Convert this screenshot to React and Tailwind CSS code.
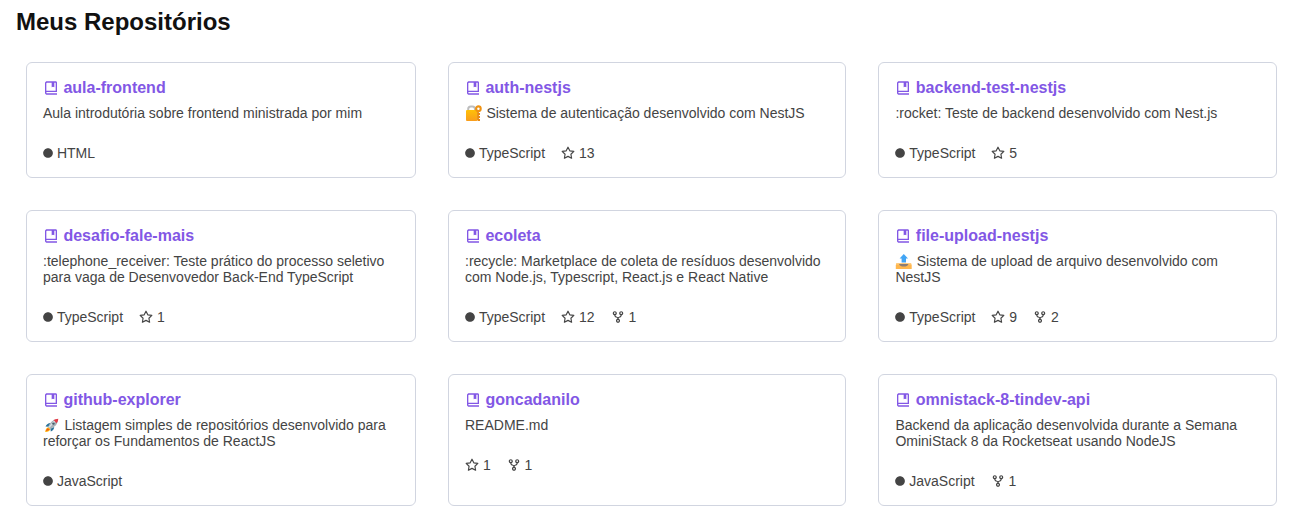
import { BiBookBookmark, BiGitRepoForked } from "react-icons/bi";
import { FiStar } from "react-icons/fi";
import { FaCircle } from "react-icons/fa";

function LockIcon() {
  return (
    <svg className="-my-1 mr-[3.9px] inline-block h-[17px] w-[17.5px] align-[0px]" viewBox="0 0 17.5 17" role="img" aria-label="🔐">
      <defs>
        <linearGradient id="lock-body" x1="0" y1="0" x2="0" y2="1">
          <stop offset="0" stopColor="#ffc107" />
          <stop offset="1" stopColor="#f99d1c" />
        </linearGradient>
      </defs>
      <path d="M3.2 6V4Q3.2 1.4 5.8 1.4H7.4Q10 1.4 10 4V6" fill="none" stroke="#bdbdbd" strokeWidth="2" />
      <rect x="1" y="5" width="11.4" height="11" rx="1" fill="url(#lock-body)" />
      <path d="M13 5V15.5M13 9H15M13 12H15M13 15H15" fill="none" stroke="#e88a12" strokeWidth="1.8" />
      <circle cx="13.4" cy="3.7" r="2.3" fill="none" stroke="#ef9212" strokeWidth="2.1" />
    </svg>
  );
}

function UploadIcon() {
  return (
    <svg className="-my-1 mr-[3.9px] inline-block h-[17px] w-[17.5px] align-[0px]" viewBox="0 0 17.5 17" role="img" aria-label="📤">
      <path d="M1.8 10H15.7L16.7 12V16H.8V12Z" fill="#ffb74d" />
      <path d="M1.3 10H16.2V11.5H1.3Z" fill="#ffcc80" />
      <path d="M4 11H13.5Q12.5 13.6 8.8 13.6T4 11Z" fill="#8d7d73" />
      <path d="M8.8 1L13 5.5H11V9.5H6.6V5.5H4.6Z" fill="#42a5f5" />
    </svg>
  );
}

function RocketIcon() {
  return (
    <svg className="-my-1 mr-[3.9px] inline-block h-[17px] w-[17.5px] align-[0px]" viewBox="0 0 17.5 17" role="img" aria-label="🚀">
      <path d="M5.7 10.2Q2.5 10.8 2.2 15Q6.5 14.8 7.4 12Z" fill="#ffb300" />
      <path d="M4.5 11.2L2.8 14.2L6.5 12.8Z" fill="#f4511e" />
      <path d="M7.5 6Q4.2 6.2 2.5 9.6L6 9.7ZM11.2 10Q11 13 7.8 14.5L7.4 11.5Z" fill="#29739b" />
      <path d="M15 2Q9.8 2.3 6.9 6.5L4.9 10L7.2 12.3L10.8 10Q15 7 15 2Z" fill="#a5b1b8" />
      <path d="M12.2 3.5L6 10.4" stroke="#d9e0e4" strokeWidth="1.4" />
      <path d="M15.3 1.7Q12.4 1.8 10.5 3.1L13.7 6.3Q15.2 4.4 15.3 1.7Z" fill="#e53945" />
      <circle cx="10.4" cy="6.6" r="1.2" fill="#47606d" />
    </svg>
  );
}

const repos = [
  { name: "aula-frontend", text: "Aula introdutória sobre frontend ministrada por mim", lang: "HTML" },
  { name: "auth-nestjs", icon: LockIcon, text: "Sistema de autenticação desenvolvido com NestJS", lang: "TypeScript", stars: 13 },
  { name: "backend-test-nestjs", text: ":rocket: Teste de backend desenvolvido com Nest.js", lang: "TypeScript", stars: 5 },
  { name: "desafio-fale-mais", text: ":telephone_receiver: Teste prático do processo seletivo para vaga de Desenvovedor Back-End TypeScript", lang: "TypeScript", stars: 1 },
  { name: "ecoleta", text: ":recycle: Marketplace de coleta de resíduos desenvolvido com Node.js, Typescript, React.js e React Native", lang: "TypeScript", stars: 12, forks: 1 },
  { name: "file-upload-nestjs", icon: UploadIcon, text: "Sistema de upload de arquivo desenvolvido com NestJS", lang: "TypeScript", stars: 9, forks: 2 },
  { name: "github-explorer", icon: RocketIcon, text: "Listagem simples de repositórios desenvolvido para reforçar os Fundamentos de ReactJS", lang: "JavaScript" },
  { name: "goncadanilo", text: "README.md", stars: 1, forks: 1 },
  { name: "omnistack-8-tindev-api", text: "Backend da aplicação desenvolvida durante a Semana OminiStack 8 da Rocketseat usando NodeJS", lang: "JavaScript", forks: 1 },
];

function RepoCard({ repo }) {
  const Emoji = repo.icon;
  return (
    <article className="rounded-md border border-[#d1d5e0] p-4">
      <h2 className="flex h-[18px] items-center gap-[4.45px] text-base font-bold leading-[18px] text-[#8257e5]">
        <BiBookBookmark size={16} />
        {repo.name}
      </h2>
      <p className="mt-2 text-sm leading-4">
        {Emoji && <span className="inline-flex h-4 items-center align-top"><Emoji /></span>}
        {repo.text}
      </p>
      <div className="mt-6 flex h-4 items-center gap-4 text-sm leading-4">
        {repo.lang && (
          <span className="flex items-center gap-[3.9px]"><FaCircle size={10} />{repo.lang}</span>
        )}
        {repo.stars && (
          <span className="flex items-center gap-[3.9px]"><FiStar size={14} />{repo.stars}</span>
        )}
        {repo.forks && (
          <span className="flex items-center gap-[3.9px]"><BiGitRepoForked size={14} />{repo.forks}</span>
        )}
      </div>
    </article>
  );
}

export default function App() {
  return (
    <main className="h-[517px] overflow-hidden bg-white px-4 pt-2 font-['Liberation_Sans',sans-serif] text-[#444]">
      <h1 className="text-2xl font-bold leading-7 text-[#111]">Meus Repositórios</h1>
      <section className="ml-[10px] mt-[26px] grid grid-cols-[390px_398.4px_398.6px] gap-x-8 gap-y-8">
        {repos.map((repo) => <RepoCard key={repo.name} repo={repo} />)}
      </section>
    </main>
  );
}
